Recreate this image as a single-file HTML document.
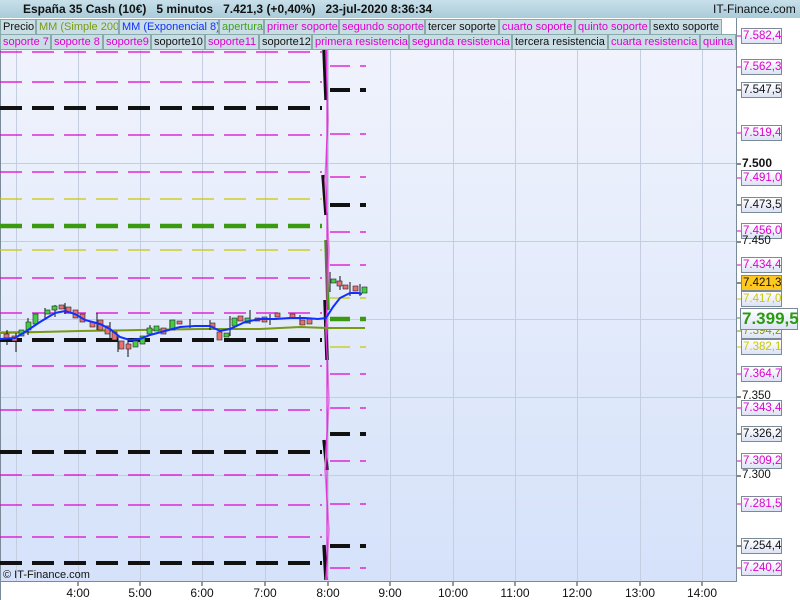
<!DOCTYPE html>
<html><head><meta charset="utf-8"><style>
body{margin:0;width:800px;height:600px;overflow:hidden;background:#fff;font-family:"Liberation Sans",sans-serif}
#hdr{position:absolute;left:0;top:0;width:800px;height:18px;background:linear-gradient(#c8e0ea,#a9cbd9);font-size:12px;font-weight:bold;color:#111}
.tab{position:absolute;height:14px;line-height:14px;font-size:11px;background:#c9dde5;border:1px solid #8aa;padding:0 0 0 2px;white-space:nowrap;overflow:hidden;box-sizing:border-box;height:16px}
.m{color:#e000d0}.o{color:#7a9a10}.b{color:#1030ff}.g{color:#40a020}.k{color:#111}
.lb{position:absolute;left:741px;width:38px;height:14px;line-height:14px;font-size:11.5px;border:1px solid #7a8a99;background:linear-gradient(#fff,#dde3f5);text-align:left;padding-left:1px}
.pl{position:absolute;left:742px;font-size:11.5px;color:#111}
</style></head><body>
<svg width="800" height="600" style="position:absolute;left:0;top:0">
<defs><linearGradient id="bg" x1="0" y1="0" x2="0" y2="1"><stop offset="0" stop-color="#f0f3fc"/><stop offset="1" stop-color="#d5e2fa"/></linearGradient></defs>
<rect x="0" y="48" width="737" height="533" fill="url(#bg)"/>
<rect x="737" y="0" width="63" height="600" fill="#fff"/>
<rect x="0" y="581" width="737" height="19" fill="#fff"/>
<g stroke="#c5cde0" stroke-width="1">
<line x1="0" y1="163.5" x2="737" y2="163.5"/><line x1="0" y1="241.5" x2="737" y2="241.5"/><line x1="0" y1="319.5" x2="737" y2="319.5"/><line x1="0" y1="397.5" x2="737" y2="397.5"/><line x1="0" y1="475.5" x2="737" y2="475.5"/>
<line x1="16.5" y1="48" x2="16.5" y2="581"/><line x1="78.5" y1="48" x2="78.5" y2="581"/><line x1="140.5" y1="48" x2="140.5" y2="581"/><line x1="202.5" y1="48" x2="202.5" y2="581"/><line x1="265.5" y1="48" x2="265.5" y2="581"/><line x1="328.5" y1="48" x2="328.5" y2="581"/><line x1="390.5" y1="48" x2="390.5" y2="581"/><line x1="453.5" y1="48" x2="453.5" y2="581"/><line x1="515.5" y1="48" x2="515.5" y2="581"/><line x1="577.5" y1="48" x2="577.5" y2="581"/><line x1="640.5" y1="48" x2="640.5" y2="581"/><line x1="702.5" y1="48" x2="702.5" y2="581"/>
</g>
<line x1="736.5" y1="0" x2="736.5" y2="582" stroke="#7a8a99"/>
<line x1="0" y1="581.5" x2="737" y2="581.5" stroke="#7a8a99"/>
<line x1="0.5" y1="48" x2="0.5" y2="600" stroke="#7a8a99"/>
<g fill="none" stroke-dasharray="22 10">
<g stroke="#e000d0" stroke-width="1.2">
<path d="M0 52H322M0 82H322M0 135H322M0 172H322M0 278H322M0 313H322M0 366H322M0 410H322M0 475H322M0 505H322M0 537H322"/>
<path d="M330 66H366M330 134H366M330 177H366M330 232H366M330 265H366M330 374H366M330 408H366M330 461H366M330 504H366M330 568H366" stroke-dasharray="20 10"/>
</g>
<g stroke="#c8c800" stroke-width="1.2"><path d="M0 199H322M0 250H322"/><path d="M330 298H366M330 347H366" stroke-dasharray="20 10"/></g>
<g stroke="#111" stroke-width="4"><path d="M0 108H322M0 340H322M0 452H322M0 563H322"/><path d="M330 90H366M330 205H366M330 434H366M330 546H366" stroke-dasharray="20 10"/></g>
<g stroke="#3a9a10" stroke-width="4.5"><path d="M0 226H322"/><path d="M330 319H366" stroke-dasharray="20 10"/></g>
</g>
<g stroke-width="3.5" fill="none">
<path d="M324 50L326 100M323 175L326 215M325 300L327 360M324 440L327 470M324 545L326 580" stroke="#111"/>
<path d="M326 240L328 310" stroke="#3a9a10"/>
</g>
<path d="M326 48L328 120L325 180L329 250L326 330L329 400L325 470L329 530L326 580" stroke="#e070e0" stroke-width="1.5" fill="none"/>
<path d="M327 48L327 580" stroke="#e000d0" stroke-width="1" fill="none"/>
<path d="M0 332H40" stroke="#e59090" stroke-width="2"/>
<path d="M0 333L40 332L80 331L140 330L200 329L260 329L300 327L327 328L360 328L365 328" stroke="#7a9a10" stroke-width="2" fill="none"/>
<g stroke="#111" stroke-width="1">
<path d="M7 330V345M16 333V352M28 318V335M45 308V320M55 305V317M65 303V314M97 313V330M110 322V338M118 335V352M128 338V357M150 325V336M170 320V330M190 319V328M210 320V330M230 316V336M250 310V324M270 314V325M300 315V325M330 272V292M340 276V290M350 282V296M360 284V296"/>
</g>
<g stroke="#222" stroke-width="0.6">
<rect x="4" y="334" width="5" height="4" fill="#e87070"/><rect x="12" y="336" width="5" height="5" fill="#e87070"/><rect x="19" y="330" width="5" height="6" fill="#44cc44"/><rect x="26" y="322" width="5" height="8" fill="#44cc44"/><rect x="33" y="314" width="5" height="10" fill="#44cc44"/><rect x="45" y="310" width="5" height="4" fill="#44cc44"/><rect x="52" y="306" width="5" height="4" fill="#44cc44"/><rect x="59" y="305" width="5" height="4" fill="#e87070"/><rect x="66" y="307" width="5" height="5" fill="#e87070"/><rect x="73" y="310" width="5" height="8" fill="#e87070"/><rect x="80" y="314" width="5" height="8" fill="#e87070"/><rect x="90" y="322" width="5" height="5" fill="#e87070"/><rect x="98" y="320" width="5" height="10" fill="#e87070"/><rect x="105" y="326" width="5" height="8" fill="#e87070"/><rect x="112" y="332" width="5" height="8" fill="#e87070"/><rect x="119" y="341" width="5" height="8" fill="#e87070"/><rect x="126" y="344" width="5" height="5" fill="#e87070"/><rect x="133" y="341" width="5" height="6" fill="#44cc44"/><rect x="140" y="336" width="5" height="8" fill="#44cc44"/><rect x="147" y="328" width="5" height="6" fill="#44cc44"/><rect x="154" y="326" width="5" height="5" fill="#44cc44"/><rect x="161" y="328" width="5" height="6" fill="#e87070"/><rect x="170" y="320" width="5" height="10" fill="#44cc44"/><rect x="177" y="321" width="5" height="3" fill="#e87070"/><rect x="210" y="323" width="5" height="4" fill="#e87070"/><rect x="217" y="332" width="5" height="8" fill="#e87070"/><rect x="224" y="333" width="5" height="4" fill="#44cc44"/><rect x="232" y="318" width="5" height="8" fill="#44cc44"/><rect x="238" y="316" width="5" height="5" fill="#e87070"/><rect x="245" y="318" width="5" height="5" fill="#44cc44"/><rect x="255" y="318" width="5" height="3" fill="#e87070"/><rect x="262" y="317" width="5" height="5" fill="#e87070"/><rect x="275" y="313" width="5" height="4" fill="#e87070"/><rect x="290" y="314" width="5" height="4" fill="#e87070"/><rect x="300" y="320" width="5" height="5" fill="#e87070"/><rect x="307" y="319" width="5" height="5" fill="#e87070"/><rect x="331" y="279" width="5" height="4" fill="#44cc44"/><rect x="337" y="281" width="5" height="5" fill="#e87070"/><rect x="343" y="285" width="5" height="4" fill="#e87070"/><rect x="353" y="286" width="5" height="5" fill="#e87070"/><rect x="362" y="287" width="5" height="6" fill="#44cc44"/>
</g>
<path d="M0 339L15 338L25 332L40 322L55 313L65 311L75 314L85 320L100 324L110 329L120 337L130 340L140 339L150 335L165 331L180 327L195 326L210 326L220 331L230 329L245 322L260 319L275 319L290 318L305 318L318 319L326 318L333 307L340 298L350 293L358 293L362 294" stroke="#1030ff" stroke-width="2" fill="none"/>
<g stroke="#111"><path d="M737 90H741M737 205H741M737 283H741M737 434H741M737 546H741M737 164H741M737 242H741M737 397H741M737 476H741"/></g>
<g stroke="#e000d0"><path d="M737 36H741M737 67H741M737 133H741M737 178H741M737 231H741M737 265H741M737 374H741M737 408H741M737 461H741M737 504H741M737 568H741"/></g>
<g stroke="#c8c800"><path d="M737 299H741M737 347H741"/></g><path d="M737 318H741" stroke="#3a9a10"/><path d="M737 331H741" stroke="#7a9a10"/>
<g stroke="#333"><path d="M78 582V586M140 582V586M202 582V586M265 582V586M328 582V586M390 582V586M453 582V586M515 582V586M577 582V586M640 582V586M702 582V586"/></g>
<g font-family="Liberation Sans" font-size="12" fill="#111" text-anchor="middle"><text x="78" y="597">4:00</text><text x="140" y="597">5:00</text><text x="202" y="597">6:00</text><text x="265" y="597">7:00</text><text x="328" y="597">8:00</text><text x="390" y="597">9:00</text><text x="453" y="597">10:00</text><text x="515" y="597">11:00</text><text x="577" y="597">12:00</text><text x="640" y="597">13:00</text><text x="702" y="597">14:00</text></g>
<text x="3" y="578" font-family="Liberation Sans" font-size="11" fill="#111">© IT-Finance.com</text>
<rect x="5" y="11" width="5" height="6" fill="#e87070" stroke="#333" stroke-width=".6"/><rect x="12" y="4" width="5" height="10" fill="#44cc44" stroke="#333" stroke-width=".6"/>
</svg>
<div id="hdr"><span style="position:absolute;left:23px;top:2px">España 35 Cash (10€)&nbsp;&nbsp;&nbsp;5 minutos&nbsp;&nbsp;&nbsp;7.421,3 (+0,40%)&nbsp;&nbsp;&nbsp;23-jul-2020 8:36:34</span><span style="position:absolute;left:713px;top:2px;font-weight:normal">IT-Finance.com</span></div>
<div class="tab k" style="left:0;top:19px;width:36px">Precio</div><div class="tab o" style="left:36px;top:19px;width:83px">MM (Simple 200)</div><div class="tab b" style="left:119px;top:19px;width:100px">MM (Exponencial 8)</div><div class="tab g" style="left:219px;top:19px;width:45px">apertura</div><div class="tab m" style="left:264px;top:19px;width:75px">primer soporte</div><div class="tab m" style="left:339px;top:19px;width:86px">segundo soporte</div><div class="tab k" style="left:425px;top:19px;width:74px">tercer soporte</div><div class="tab m" style="left:499px;top:19px;width:76px">cuarto soporte</div><div class="tab m" style="left:575px;top:19px;width:75px">quinto soporte</div><div class="tab k" style="left:650px;top:19px;width:72px">sexto soporte</div>
<div class="tab m" style="left:0;top:34px;width:51px">soporte 7</div><div class="tab m" style="left:51px;top:34px;width:52px">soporte 8</div><div class="tab m" style="left:103px;top:34px;width:48px">soporte9</div><div class="tab k" style="left:151px;top:34px;width:54px">soporte10</div><div class="tab m" style="left:205px;top:34px;width:54px">soporte11</div><div class="tab k" style="left:259px;top:34px;width:53px">soporte12</div><div class="tab m" style="left:312px;top:34px;width:97px">primera resistencia</div><div class="tab m" style="left:409px;top:34px;width:103px">segunda resistencia</div><div class="tab k" style="left:512px;top:34px;width:96px">tercera resistencia</div><div class="tab m" style="left:608px;top:34px;width:92px">cuarta resistencia</div><div class="tab m" style="left:700px;top:34px;width:36px">quinta r</div>
<div class="lb m" style="top:28px">7.582,4</div><div class="lb m" style="top:59px">7.562,3</div><div class="lb k" style="top:82px">7.547,5</div><div class="lb m" style="top:125px">7.519,4</div>
<div class="pl" style="top:156px;font-weight:bold;font-size:12px">7.500</div>
<div class="lb m" style="top:170px">7.491,0</div><div class="lb k" style="top:197px">7.473,5</div><div class="lb m" style="top:223px">7.456,0</div>
<div class="pl" style="top:235px">7.450</div>
<div class="lb m" style="top:257px">7.434,4</div><div class="lb k" style="top:275px;background:#ffc820">7.421,3</div><div class="lb" style="top:291px;color:#c8c800">7.417,0</div><div class="lb" style="top:323px;color:#7a9a10">7.394,2</div>
<div class="lb" style="top:308px;left:740px;width:55px;height:20px;line-height:20px;font-size:17px;font-weight:bold;color:#2a9a10;z-index:2">7.399,5</div>
<div class="lb" style="top:339px;color:#c8c800">7.382,1</div><div class="lb m" style="top:366px">7.364,7</div>
<div class="pl" style="top:390px">7.350</div>
<div class="lb m" style="top:400px">7.343,4</div><div class="lb k" style="top:426px">7.326,2</div><div class="lb m" style="top:453px">7.309,2</div>
<div class="pl" style="top:469px">7.300</div>
<div class="lb m" style="top:496px">7.281,5</div><div class="lb k" style="top:538px">7.254,4</div><div class="lb m" style="top:560px">7.240,2</div>
</body></html>
